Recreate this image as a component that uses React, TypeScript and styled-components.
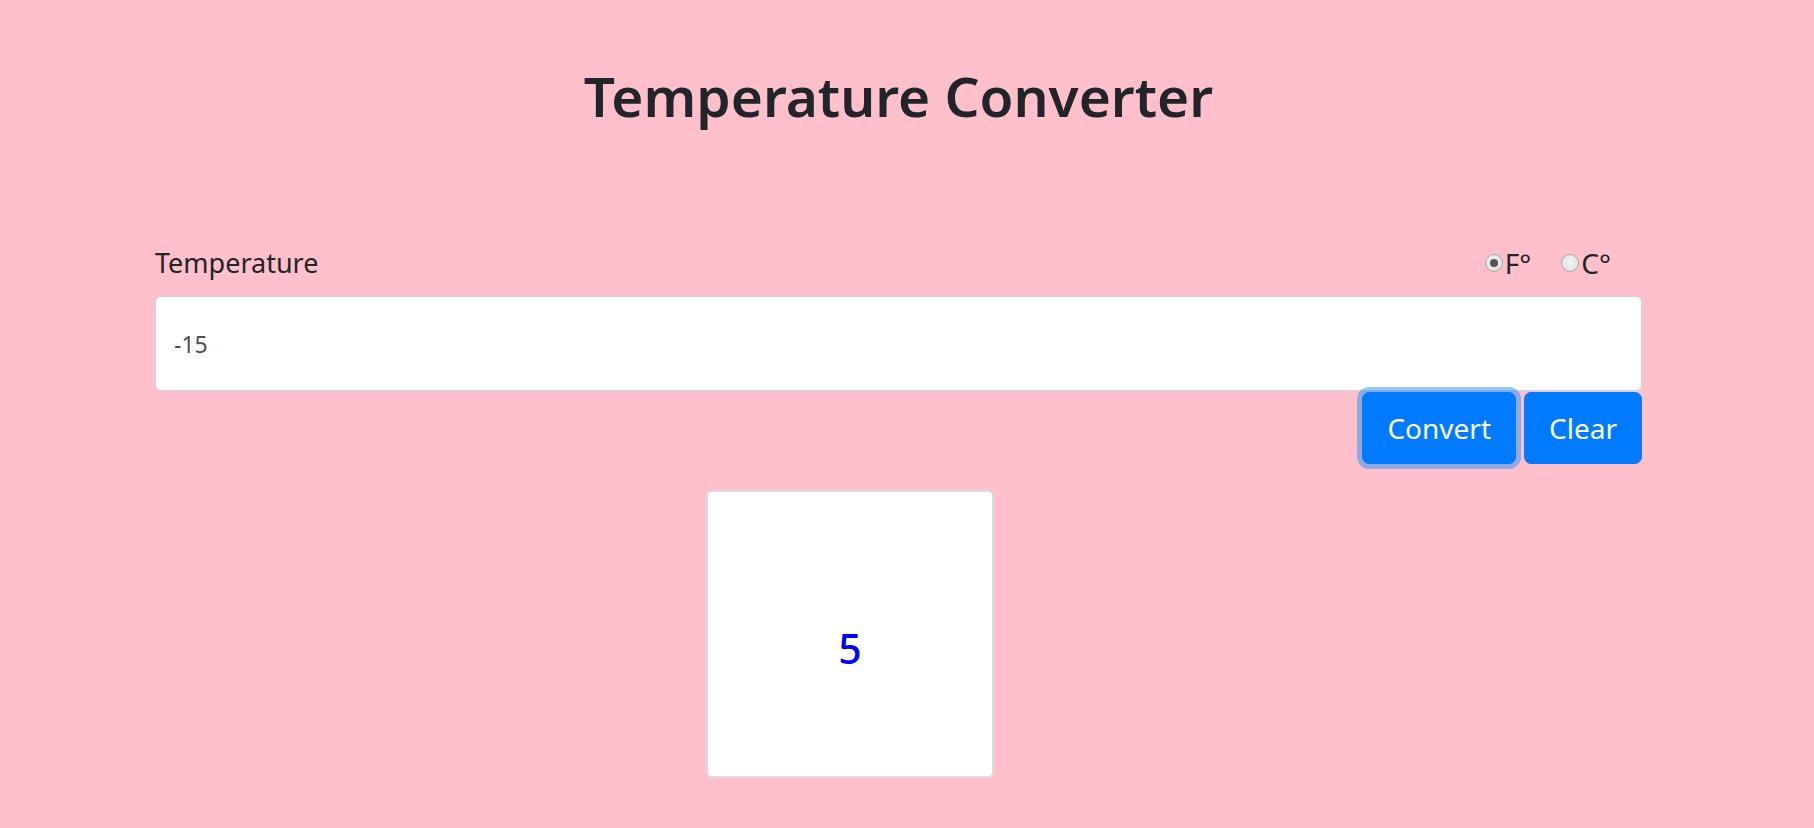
import React, { useState } from "react";
import styled, { createGlobalStyle } from "styled-components";

const GlobalStyle = createGlobalStyle`
  html, body {
    margin: 0;
    padding: 0;
    background: #ffc0cb;
  }
  body {
    font-family: "Noto Sans", "Open Sans", sans-serif;
    color: #212529;
  }
  * { box-sizing: border-box; }
`;

const Page = styled.div`
  display: flex;
  flex-direction: column;
  align-items: center;
  padding-right: 17px;
  min-height: 828px;
`;

const Container = styled.div`
  width: 1487px;
  display: flex;
  flex-direction: column;
`;

const Title = styled.h1`
  margin: 60px 0 0;
  font-size: 55px;
  font-weight: 600;
  line-height: 72px;
  text-align: center;
  color: #212529;
`;

const LabelRow = styled.div`
  margin-top: 110px;
  display: flex;
  align-items: center;
  justify-content: space-between;
  height: 42px;
`;

const FieldLabel = styled.label`
  font-size: 27px;
  line-height: 42px;
  color: #212529;
`;

const RadioGroup = styled.div`
  display: flex;
  align-items: center;
  gap: 30px;
  padding-right: 31px;
`;

const RadioLabel = styled.label`
  display: flex;
  align-items: center;
  gap: 2px;
  font-size: 28px;
  line-height: 42px;
  color: #212529;
  cursor: pointer;
`;

const RadioInput = styled.input`
  appearance: none;
  margin: 0;
  width: 18px;
  height: 18px;
  border-radius: 50%;
  border: 1px solid #a9a9a9;
  background: radial-gradient(circle at 50% 40%, #f2f2f2 0%, #dcdcdc 100%);
  display: grid;
  place-items: center;

  &:checked::after {
    content: "";
    width: 8px;
    height: 8px;
    border-radius: 50%;
    background: #555;
  }
`;

const TempInput = styled.input`
  margin-top: 12px;
  width: 100%;
  height: 95px;
  padding: 0 18px;
  border: 1px solid #ced4da;
  border-radius: 6px;
  background: #fff;
  font-family: inherit;
  font-size: 23px;
  color: #495057;
  outline: none;
`;

const ButtonRow = styled.div`
  margin-top: 1px;
  display: flex;
  justify-content: flex-end;
  gap: 8px;
`;

const Button = styled.button<{ $focused?: boolean }>`
  height: 72px;
  padding: 0 24px;
  border: 1px solid #007bff;
  border-radius: 7px;
  background: #007bff;
  color: #fff;
  font-family: inherit;
  font-size: 28px;
  line-height: 1;
  cursor: pointer;
  box-shadow: ${(p) => (p.$focused ? "0 0 0 5px rgba(38, 143, 255, 0.5)" : "none")};
`;

const ResultRow = styled.div`
  margin-top: 26px;
  display: flex;
  padding-left: 551px;
`;

const ResultBox = styled.div`
  width: 288px;
  height: 288px;
  border: 2px solid #dcdcdc;
  border-radius: 6px;
  background: #fff;
  display: flex;
  align-items: center;
  justify-content: center;
  padding-top: 28px;
`;

const ResultValue = styled.span`
  font-size: 41px;
  font-weight: 500;
  color: #0000ff;
`;

export default function App() {
  const [unit, setUnit] = useState<"F" | "C">("F");
  const [value, setValue] = useState("-15");

  return (
    <>
      <GlobalStyle />
      <Page>
        <Container>
          <Title>Temperature Converter</Title>
          <LabelRow>
            <FieldLabel htmlFor="temp">Temperature</FieldLabel>
            <RadioGroup>
              <RadioLabel>
                <RadioInput
                  type="radio"
                  name="unit"
                  checked={unit === "F"}
                  onChange={() => setUnit("F")}
                />
                F°
              </RadioLabel>
              <RadioLabel>
                <RadioInput
                  type="radio"
                  name="unit"
                  checked={unit === "C"}
                  onChange={() => setUnit("C")}
                />
                C°
              </RadioLabel>
            </RadioGroup>
          </LabelRow>
          <TempInput
            id="temp"
            value={value}
            onChange={(e) => setValue(e.target.value)}
          />
          <ButtonRow>
            <Button $focused>Convert</Button>
            <Button onClick={() => setValue("")}>Clear</Button>
          </ButtonRow>
          <ResultRow>
            <ResultBox>
              <ResultValue>5</ResultValue>
            </ResultBox>
          </ResultRow>
        </Container>
      </Page>
    </>
  );
}
